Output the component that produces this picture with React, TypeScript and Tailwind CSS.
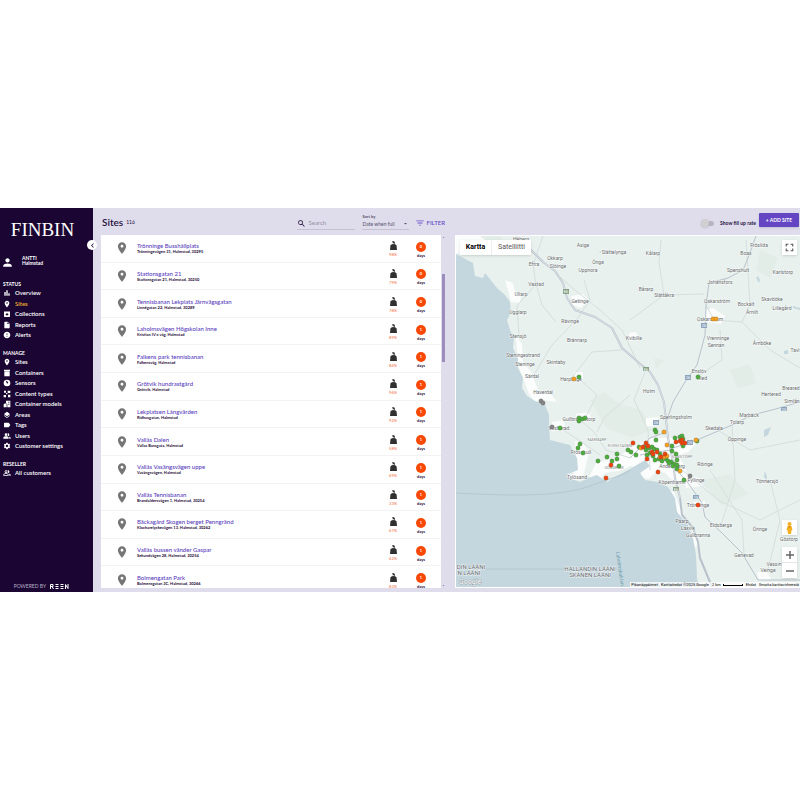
import {
  MdArchive,
  MdArrowDropDown,
  MdArrowDropUp,
  MdBarChart,
  MdChevronLeft,
  MdError,
  MdFilterList,
  MdFullscreen,
  MdInsertDriveFile,
  MdLabel,
  MdLayers,
  MdLocationOn,
  MdOutlinePeopleAlt,
  MdPeopleAlt,
  MdPerson,
  MdSearch,
  MdSettings,
} from 'react-icons/md';
import type { ComponentType } from 'react';

type IconProps = { size?: number; className?: string };
type NavItem = { label: string; icon: ComponentType<IconProps>; active?: boolean };

function ContainerIcon({ size = 8, className }: IconProps) {
  return (
    <svg viewBox="0 0 24 24" width={size} height={size} className={className} fill="currentColor" aria-hidden="true">
      <path d="M3 2h18v4H3zM4 7h16v15H4z" />
    </svg>
  );
}

function SensorIcon({ size = 8, className }: IconProps) {
  return (
    <svg viewBox="0 0 24 24" width={size} height={size} className={className} fill="currentColor" aria-hidden="true">
      <path fillRule="evenodd" d="M12 2a10 10 0 1 0 0 20 10 10 0 0 0 0-20zM8 4l7 5a2 2 0 1 1-4 3z" />
    </svg>
  );
}

function ContentTypesIcon({ size = 8, className }: IconProps) {
  return (
    <svg viewBox="0 0 24 24" width={size} height={size} className={className} fill="currentColor" aria-hidden="true">
      <path d="M3 2h6v6H3zM14 2h8v7h-8zM9 9h4v4H9zM2 15h7v7H2zM15 14h7v8h-7z" />
    </svg>
  );
}

function ModelsIcon({ size = 8, className }: IconProps) {
  return (
    <svg viewBox="0 0 24 24" width={size} height={size} className={className} fill="currentColor" aria-hidden="true">
      <path fillRule="evenodd" d="M9 2h13v20h-9v-9l-4-3zM16 5v3h3V5zM16 11v3h3v-3zM2 13l5-3 4 3v9H2z" />
    </svg>
  );
}

const groups: { title: string; list: string; items: NavItem[] }[] = [
  {
    title: 'STATUS',
    list: 'h-[52px]',
    items: [
      { label: 'Overview', icon: MdBarChart },
      { label: 'Sites', icon: MdLocationOn, active: true },
      { label: 'Collections', icon: MdArchive },
      { label: 'Reports', icon: MdInsertDriveFile },
      { label: 'Alerts', icon: MdError },
    ],
  },
  {
    title: 'MANAGE',
    list: 'h-[94px]',
    items: [
      { label: 'Sites', icon: MdLocationOn },
      { label: 'Containers', icon: ContainerIcon },
      { label: 'Sensors', icon: SensorIcon },
      { label: 'Content types', icon: ContentTypesIcon },
      { label: 'Container models', icon: ModelsIcon },
      { label: 'Areas', icon: MdLayers },
      { label: 'Tags', icon: MdLabel },
      { label: 'Users', icon: MdPeopleAlt },
      { label: 'Customer settings', icon: MdSettings },
    ],
  },
  { title: 'RESELLER', list: 'h-[10px]', items: [{ label: 'All customers', icon: MdOutlinePeopleAlt }] },
];

const sites = [
  { name: 'Trönninge Busshållplats', address: 'Trönningevägen 31, Halmstad, 30295', fill: 98, days: 0 },
  { name: 'Stationsgatan 21', address: 'Stationsgatan 21, Halmstad, 30250', fill: 79, days: 0 },
  { name: 'Tennisbanan Lekplats Järnvägsgatan', address: 'Linnégatan 22, Halmstad, 30289', fill: 78, days: 0 },
  { name: 'Laholmsvägen Högskolan Inne', address: 'Kristian IV:s väg, Halmstad', fill: 89, days: 1 },
  { name: 'Falkens park tennisbanan', address: 'Falkensväg, Halmstad', fill: 84, days: 1 },
  { name: 'Grötvik hundrastgård', address: 'Grötvik, Halmstad', fill: 96, days: 1 },
  { name: 'Lekplatsen Långvärden', address: 'Ridhusgatan, Halmstad', fill: 92, days: 1 },
  { name: 'Vallås Dalen', address: 'Vallås Bussgata, Halmstad', fill: 58, days: 1 },
  { name: 'Vallås Vasängsvägen uppe', address: 'Vasängsvägen, Halmstad', fill: 69, days: 1 },
  { name: 'Vallås Tennisbanan', address: 'Brandåldersvägen 1, Halmstad, 30254', fill: 33, days: 1 },
  { name: 'Bäckagård Skogen berget Penngränd', address: 'Klockarelyckevägen 13, Halmstad, 30262', fill: 67, days: 1 },
  { name: 'Vallås bussen vänder Gaspar', address: 'Sekundvägen 28, Halmstad, 30254', fill: 42, days: 1 },
  { name: 'Bolmengatan Park', address: 'Bolmensgatan 3C, Halmstad, 30266', fill: 83, days: 1 },
];

function Sidebar() {
  return (
    <aside className="relative flex w-[93px] shrink-0 flex-col bg-[#1b0633] text-white">
      <div className="pt-3 pr-2 text-center font-['Liberation_Serif',serif] text-[19px] leading-5">FINBIN</div>
      <button
        aria-label="Collapse menu"
        className="absolute top-8 -right-1 z-10 flex size-[10px] items-center justify-center rounded-full bg-white text-[#1b0633]"
      >
        <MdChevronLeft size={9} />
      </button>
      <div className="mt-4 flex items-center gap-2 pl-px text-[5px] leading-[5px] font-bold">
        <MdPerson size={13} />
        <div className="pb-[3px]">
          <div>ANTTI</div>
          <div>Halmstad</div>
        </div>
      </div>
      <nav className="mt-[11px] flex flex-col gap-[9px] pl-[3px]">
        {groups.map((group) => (
          <section key={group.title}>
            <h2 className="text-[5px] leading-[8px] font-bold">{group.title}</h2>
            <ul className={'flex flex-col justify-between ' + group.list}>
              {group.items.map(({ label, icon: Icon, active }) => (
                <li key={label}>
                  <a href="#" className="flex h-[10px] items-center gap-1 text-[6px] leading-[10px] font-semibold">
                    <Icon size={8} className="shrink-0" />
                    <span className={active ? 'text-[#f0b02e]' : ''}>{label}</span>
                  </a>
                </li>
              ))}
            </ul>
          </section>
        ))}
      </nav>
      <div className="mt-auto flex items-center justify-end gap-[4px] pr-6 text-[5px] leading-[11px] text-[#b9b0c6]">
        <span className="whitespace-nowrap">POWERED BY</span>
        <svg viewBox="0 0 38 10" className="h-[5px] w-[19px]" fill="none" stroke="#fff" strokeWidth="2" role="img" aria-label="REEN">
          <path d="M1 10V1h5v4H1M4 5l3 5M11 1h6M11 5h6M11 9h6M21 1h6M21 5h6M21 9h6M31 10V1l5 8V0" />
        </svg>
      </div>
    </aside>
  );
}

function WeightIcon() {
  return (
    <svg viewBox="0 0 16 20" className="h-[9px] w-[7px]" fill="#303030" aria-hidden="true">
      <path fillRule="evenodd" d="M5 0h5v2h1v4H9V4H6V2H5zM6 6h4l1 2H5z" />
      <path d="M4 7h8l3 3 1 10H0l1-10z" />
    </svg>
  );
}

function SiteList() {
  return (
    <section className="flex min-w-0 flex-1 flex-col">
      <header className="flex h-[27px] items-center pl-px">
        <h1 className="text-[10px] leading-3 font-semibold text-[#26123f]">Sites</h1>
        <span className="ml-[3px] text-[5px] leading-[6px] text-[#26123f]">116</span>
        <label className="mt-1 ml-auto flex h-3 w-[58px] items-center gap-[2px] border-b border-[#c6c2d4] text-[#1b0633]">
          <MdSearch size={9} className="shrink-0" aria-hidden="true" />
          <input
            type="search"
            aria-label="Search"
            placeholder="Search"
            className="w-full min-w-0 bg-transparent text-[6px] leading-[8px] outline-none placeholder:text-[#9691a3]"
          />
        </label>
        <div className="ml-[7px] flex w-[47px] flex-col">
          <label htmlFor="sort" className="text-[4px] leading-[5px] font-bold text-[#55506a]">
            Sort by
          </label>
          <div className="flex h-[11px] items-center border-b border-[#c6c2d4] text-[#55506a]">
            <select id="sort" className="w-full min-w-0 appearance-none bg-transparent text-[5px] leading-[8px] outline-none">
              <option>Date when full</option>
            </select>
            <MdArrowDropDown size={7} className="shrink-0" />
          </div>
        </div>
        <button className="ml-[6px] flex items-center gap-px pt-[2px] pr-px text-[6px] leading-[8px] font-semibold text-[#6a52c8]">
          <MdFilterList size={10} />
          FILTER
        </button>
      </header>
      <div className="flex h-[353px]">
        <div className="flex-1 overflow-hidden bg-white">
          <ul className="grid h-[359px] auto-rows-fr">
            {sites.map((site) => (
              <li key={site.name} className="flex items-center border-b border-[#f3f3f6] pr-[14px] pl-[14px]">
                <MdLocationOn size={14} className="shrink-0 text-[#757575]" />
                <div className="ml-2 min-w-0 flex-1">
                  <a href="#" className="block text-[6px] leading-[7px] font-medium text-[#5a41bd]">
                    {site.name}
                  </a>
                  <div className="text-[4px] leading-[5px] font-bold text-[#1b0633]">{site.address}</div>
                </div>
                <div className="flex w-[14px] flex-col items-center pt-[3px]">
                  <WeightIcon />
                  <span className="mt-[2px] text-[4px] leading-[6px] text-[#f26a3a]">{site.fill}%</span>
                </div>
                <div className="ml-[15px] flex w-[12px] flex-col items-center pt-1">
                  <span className="flex size-[10px] items-center justify-center rounded-full bg-[#f84803] text-[4px] leading-none font-bold text-white">
                    {site.days}
                  </span>
                  <span className="mt-px text-[4px] leading-[6px] font-bold text-[#1b0633]">days</span>
                </div>
              </li>
            ))}
          </ul>
        </div>
        <div className="flex w-[5px] flex-col items-center justify-between text-[#8b86a0]">
          <MdArrowDropUp size={5} />
          <div className="mt-[34px] mb-auto h-[88px] w-[3px] bg-[#9d8dbc]" />
          <MdArrowDropDown size={5} />
        </div>
      </div>
    </section>
  );
}

type Place = [string, number, number];

const places: Place[] = [
  ['Heberg', 521, 239], ['Asige', 583, 245], ['Slättelynga', 614, 252], ['Okkarp', 555, 258],
  ['Eftra', 534, 264], ['Slöinge', 558, 266], ['Önge', 598, 262], ['Uppnora', 588, 270],
  ['Vastad', 536, 284], ['Ullarp', 521, 294], ['Getinge', 580, 301], ['Ugglarp', 518, 312],
  ['Rävinge', 570, 321], ['Brännarp', 577, 340], ['Stensjö', 518, 336], ['Steningestrand', 523, 355],
  ['Steninge', 525, 364], ['Skintaby', 556, 362], ['Särdal', 532, 376], ['Harplinge', 571, 379],
  ['Haverdal', 543, 392], ['Kålarp', 653, 253], ['Fröslida', 759, 245], ['Boas', 746, 253],
  ['Spenshult', 738, 270], ['Karlstorp', 783, 272], ['Johansfors', 720, 282], ['Bårarp', 646, 289],
  ['Slättåkra', 664, 295], ['Oskarström', 717, 301], ['Bockalt', 746, 304], ['Skavböke', 772, 299],
  ['Lillegård', 782, 308], ['Årnilt', 752, 312], ['Oskarström', 710, 319], ['Kvibille', 634, 338],
  ['Vrenninge', 718, 338], ['Sennan', 716, 345], ['Årnböke', 762, 343], ['Tavl', 795, 350],
  ['Enslöv', 699, 371], ['Åled', 702, 378], ['Holm', 649, 391], ['Breared', 791, 388],
  ['Hertered', 771, 394], ['Gullbrandstorp', 579, 419], ['Vilshärad', 559, 428], ['Frösakull', 581, 452],
  ['Tylösand', 577, 477], ['Sperlingsholm', 676, 417], ['Skedala', 714, 428], ['Tolarp', 737, 422],
  ['Marbäck', 749, 415], ['Simlån', 792, 401], ['Öppinge', 737, 439], ['Röinge', 705, 464],
  ['Tönnersjö', 767, 481], ['Andersberg', 672, 466], ['Köpenhamn', 672, 482], ['Fyllinge', 696, 480],
  ['Trönninge', 698, 505], ['Påarp', 682, 521], ['Laxvik', 688, 528], ['Gullbranna', 698, 535],
  ['Eldsberga', 721, 525], ['Öringe', 760, 529], ['Göstorp', 789, 539], ['Genevad', 744, 555],
  ['Vessin', 774, 564], ['Veinge', 768, 570],
];

const districts: Place[] = [
  ['FAMMARP', 597, 439], ['FLYGSTADEN', 620, 445], ['SÖNDRUM', 614, 467], ['VÄNSTORP', 682, 456],
];

const GREEN = '#4caf3c';
const RED = '#f0440c';
const ORANGE = '#f9a11b';
const GREY = '#858585';

const markers: { color: string; at: [number, number][] }[] = [
  { color: GREY, at: [[541, 401], [543, 403], [552, 427], [690, 476]] },
  {
    color: GREEN,
    at: [
      [579, 377], [698, 377], [579, 418], [582, 419], [585, 418], [579, 421], [560, 428], [580, 444], [578, 448],
      [583, 453], [598, 461], [607, 457], [617, 454], [617, 459], [612, 461], [619, 466], [628, 450], [631, 452],
      [636, 455], [655, 430], [656, 432], [656, 440], [639, 447], [646, 450], [649, 448], [652, 447], [654, 449],
      [657, 450], [647, 455], [650, 453], [653, 456], [660, 454], [655, 460], [659, 459], [661, 457], [662, 461],
      [666, 459], [668, 461], [671, 462], [674, 464], [677, 465], [677, 460], [677, 469], [675, 438], [680, 437],
      [682, 436], [683, 439], [682, 442], [672, 446], [672, 451], [676, 454], [683, 446], [697, 441], [665, 457],
      [684, 480], [669, 463], [673, 466], [645, 447],
    ],
  },
  {
    color: ORANGE,
    at: [[574, 379], [713, 319], [716, 319], [641, 448], [664, 432], [667, 445], [660, 457], [664, 457], [667, 456], [696, 440], [680, 471]],
  },
  {
    color: RED,
    at: [
      [611, 465], [606, 478], [633, 443], [646, 443], [643, 447], [648, 446], [647, 459], [652, 452], [653, 454],
      [657, 452], [661, 457], [665, 454], [676, 442], [680, 441], [682, 440], [685, 443], [682, 443], [658, 472],
      [698, 505],
    ],
  },
];

function MapDrawing() {
  return (
    <svg
      viewBox="456 236 344 351"
      preserveAspectRatio="xMidYMid slice"
      className="block h-full w-full font-['Roboto',sans-serif]"
      role="img"
      aria-label="Map of Halmstad"
    >
      <rect x="456" y="236" width="344" height="351" fill="#e8f1ed" />
      <g fill="#e3ede8">
        <path d="M590 400l14-8 16 12 22 6 10 20-20 8-26-10zM480 236l20 0 8 14-18 4zM700 480l30-6 18 20-26 12zM654 358l10 2-8 10z" />
        <path d="M760 250l18 8-8 20-14-8zM730 370l20-6 6 20-18 4z" />
      </g>
      <g fill="#fbfcfc">
        <path d="M456 236h24l8 6-14 8-18 4zM505 280l8 3 2 10 6 2-1 8-9-1zM571 296l12-2 6 6-8 8-9-3zM705 310l8-2 12 8-4 8-14-2zM574 372l9 0 0 7-9 1zM629 333l7-1 3 6-9 3z" />
        <path d="M516 336l6 8 1 18 8 10 8 20 12 2 6 8-14-2-8 2-6-8-6-16-5-14zM552 422l12-2 1 9-13 2zM576 414l12-2 4 7-14 4zM575 441l9 3 5 9-6 24-10 4-12-5 12-2 3-14zM596 463l22-6 14-10 20-9 30 0 14 6-8 8-10 3 6 10 4 12-3 6-12-2-8-8-8-2-8 8-10-2 4-8-12-3-12 5-14 2-8 10-8-6zM646 418l12-1 0 8-12 2zM684 476l16 2 2 8-16 2zM693 502l12-1 0 7-12 0zM668 490l6 2 6 16 8 22 10 10-2 8-8-12-9-20zM757 572l10 0 4 7-12 2z" />
      </g>
      <path
        fill="#c5d7de"
        d="M456 254L473 263L475 276L483 278L485 273L497 288L505 295L510 302L511 312L507 320L510 330L514 338L513 348L518 358V368L523 378L522 388L527 396L535 401L545 405L549 415V425L550 440L558 442L570 445L577 458L578 470L568 474L567 477L580 482L588 478L597 475L607 482L615 477L630 469L645 460L650 466L640 473L645 480L658 482L668 487L675 498L677 512L688 525L693 538L696 555L697 578L699 587H456Z"
      />
      <g fill="#c5d7de">
        <path d="M756 278l2-2 2 4-1 3zM764 430l7-3-3 8-4 2zM765 471l2 6-1 4-2-5zM784 351l4-1 0 4-4 0zM793 306l7 2v2l-7-2zM599 252l2-1 0 2z" />
      </g>
      <g fill="none" stroke="#b3c8d0">
        <path d="M456 493C510 496 560 497 590 486S622 476 630 470" />
        <path d="M482 569H566" />
      </g>
      <g fill="none" stroke="#d6dfde" strokeLinejoin="round">
        <path d="M543 236L533 265L536 284L517 306L519 336M536 284L542 305L556 322M535 373L552 345L577 319L590 300L584 280M555 273L575 290L600 310L622 330L640 368" />
        <path d="M571 379L592 352L622 350M585 418L597 395L576 376M597 432L604 418L630 395M579 419L594 432L606 450L630 458M661 240L659 262L664 295L630 320M664 295L704 294M706 305L714 320L742 322L750 305L746 240" />
        <path d="M742 322L770 350L800 368M650 470L648 430L634 400L645 372M697 377L722 360L720 330M682 470L718 500L760 520L800 500M714 428L750 450L800 440M710 470L742 520L744 555M560 428L579 440L600 455M768 570L780 520L770 480M721 525L735 480L732 425" />
      </g>
      <g fill="none" stroke="#b9c2cc" strokeLinejoin="round">
        <path
          strokeWidth="2"
          d="M516 237L531 250L543 262L555 271L563 283L567 298L575 310L595 317L612 328L622 348L638 362L650 372L658 385L664 402L668 438L673 462L675 478L680 498L682 515L693 528L698 542L700 558L712 587"
        />
        <path
          strokeWidth="1"
          d="M756 236L748 258L743 270L728 278L709 283L706 305L705 335L697 365L685 382L673 402L667 420M670 449L697 440L732 425L752 415L772 410L800 402M675 468L688 483L702 503L705 517L722 533L742 553L758 580H800M630 458L650 438L666 432M640 455L670 450"
        />
      </g>
      <path
        fill="none"
        stroke="#fff"
        strokeWidth="0.500"
        d="M516 237L531 250L543 262L555 271L563 283L567 298L575 310L595 317L612 328L622 348L638 362L650 372L658 385L664 402L668 438L673 462L675 478L680 498"
      />
      <g fontSize="4" textAnchor="middle" fill="#fff">
        <rect x="563" y="289" width="6" height="5" fill="#86a186" />
        <text x="566" y="293">E6</text>
        <rect x="643" y="367" width="6" height="4" fill="#86a186" />
        <text x="646" y="371">E6</text>
        <rect x="673" y="487" width="6" height="4" fill="#86a186" />
        <text x="676" y="491">E6</text>
        <rect x="701" y="323" width="6" height="5" fill="#8ea4bd" />
        <text x="704" y="327">26</text>
        <rect x="685" y="375" width="6" height="5" fill="#8ea4bd" />
        <text x="688" y="379">26</text>
        <rect x="653" y="420" width="6" height="5" fill="#8ea4bd" />
        <text x="656" y="424">26</text>
        <rect x="687" y="440" width="6" height="5" fill="#8ea4bd" />
        <text x="690" y="444">25</text>
        <rect x="781" y="407" width="6" height="4" fill="#8ea4bd" />
        <text x="784" y="411">25</text>
        <rect x="693" y="495" width="6" height="4" fill="#8ea4bd" />
        <text x="696" y="499">15</text>
      </g>
      <g textAnchor="middle" dominantBaseline="central" stroke="#fff" strokeWidth="1" strokeOpacity="0.700" paintOrder="stroke" fill="#686c6e">
        <g fontSize="5">
          {places.map(([name, x, y]) => (
            <text key={name + y} x={x} y={y}>
              {name}
            </text>
          ))}
        </g>
        <g fontSize="4" fill="#85898b">
          {districts.map(([name, x, y]) => (
            <text key={name} x={x} y={y}>
              {name}
            </text>
          ))}
        </g>
        <g fontSize="6">
          <text x="590" y="568">HALLANDIN LÄÄNI</text>
          <text x="590" y="574">SKÅNEN LÄÄNI</text>
          <text x="471" y="566">DIN LÄÄNI</text>
          <text x="469" y="572">N LÄÄNI</text>
        </g>
      </g>
      <text transform="translate(616 552) rotate(82)" fontSize="5" fill="#6f9eae">
        Laholmsbukten
      </text>
      <g stroke="#555" strokeOpacity="0.500" strokeWidth="0.500">
        {markers.map(({ color, at }) =>
          at.map(([x, y]) => <circle key={color + x + '-' + y} cx={x} cy={y} r="2.200" fill={color} />),
        )}
      </g>
      <text x="459" y="584" fontSize="7" fill="#fff" stroke="#9aa6ab" strokeWidth="1" paintOrder="stroke">
        Google
      </text>
    </svg>
  );
}

function SiteMap() {
  return (
    <section className="flex min-w-0 flex-1 flex-col">
      <header className="flex h-[27px] items-center justify-end gap-[3px] pr-px">
        <label className="flex items-center gap-[6px] pt-[3px] text-[5px] leading-[8px] font-bold text-[#26123f]">
          <input
            type="checkbox"
            className="flex h-[5px] w-[13px] appearance-none items-center rounded-full bg-[#b9b5c3] before:size-[8px] before:shrink-0 before:rounded-full before:bg-[#d2cfd3] before:shadow-sm"
          />
          Show fill up rate
        </label>
        <button className="mb-[3px] h-[14px] w-10 rounded-[1px] bg-[#6446c4] text-[5px] leading-[14px] font-bold whitespace-nowrap text-white shadow-sm">
          + ADD SITE
        </button>
      </header>
      <div className="relative h-[353px] overflow-hidden border-y border-l border-white font-['Roboto',sans-serif]">
        <MapDrawing />
        <div className="absolute top-1 left-1 flex h-[15px] bg-white text-[7px] leading-[15px] text-[#565656] shadow-sm">
          <button className="w-8 border-r border-[#eee] font-bold text-black">Kartta</button>
          <button className="w-[39px]">Satelliitti</button>
        </div>
        <button aria-label="Full screen" className="absolute top-1 right-[3px] flex size-[15px] items-center justify-center bg-white text-[#555] shadow-sm">
          <MdFullscreen size={13} />
        </button>
        <div className="absolute right-[3px] bottom-[9px] flex w-[15px] flex-col gap-3">
          <button aria-label="Street View" className="flex size-[15px] items-center justify-center bg-white shadow-sm">
            <svg viewBox="0 0 12 24" className="h-3 w-[7px]" fill="#f5b022" aria-hidden="true">
              <circle cx="6" cy="4" r="4" />
              <path d="M2 8h8l2 8-2 1-1 7H3l-1-7-2-1z" />
              <path d="M3 9l3 3 3-3z" fill="#d07d12" />
            </svg>
          </button>
          <div className="flex flex-col bg-white text-[#666] shadow-sm">
            <button aria-label="Zoom in" className="flex h-4 items-center justify-center border-b border-[#e6e6e6]">
              <svg viewBox="0 0 8 8" className="size-2" stroke="currentColor" aria-hidden="true">
                <path d="M0 4h8M4 0v8" strokeWidth="1.500" />
              </svg>
            </button>
            <button aria-label="Zoom out" className="flex h-[15px] items-center justify-center">
              <svg viewBox="0 0 8 8" className="size-2" stroke="currentColor" aria-hidden="true">
                <path d="M0 4h8" strokeWidth="1.500" />
              </svg>
            </button>
          </div>
        </div>
        <div className="absolute right-0 bottom-0 flex items-center gap-[3px] bg-white/70 px-px text-[4px] leading-[5px] whitespace-nowrap text-black">
          <button>Pikanäppäimet</button>
          <span>Karttatiedot ©2025 Google</span>
          <span className="flex items-center gap-[2px]">
            2 km
            <span className="h-[2px] w-5 border-x border-b border-black" />
          </span>
          <a href="#">Ehdot</a>
          <a href="#">Ilmoita karttavirheestä</a>
        </div>
      </div>
    </section>
  );
}

export default function App() {
  return (
    <div className="flex min-h-screen items-center bg-white font-['Lato',sans-serif]">
      <div className="flex h-96 w-full bg-[#dfdcec]">
        <Sidebar />
        <main className="flex min-w-0 flex-1 gap-[9px] pl-2">
          <SiteList />
          <SiteMap />
        </main>
      </div>
    </div>
  );
}
